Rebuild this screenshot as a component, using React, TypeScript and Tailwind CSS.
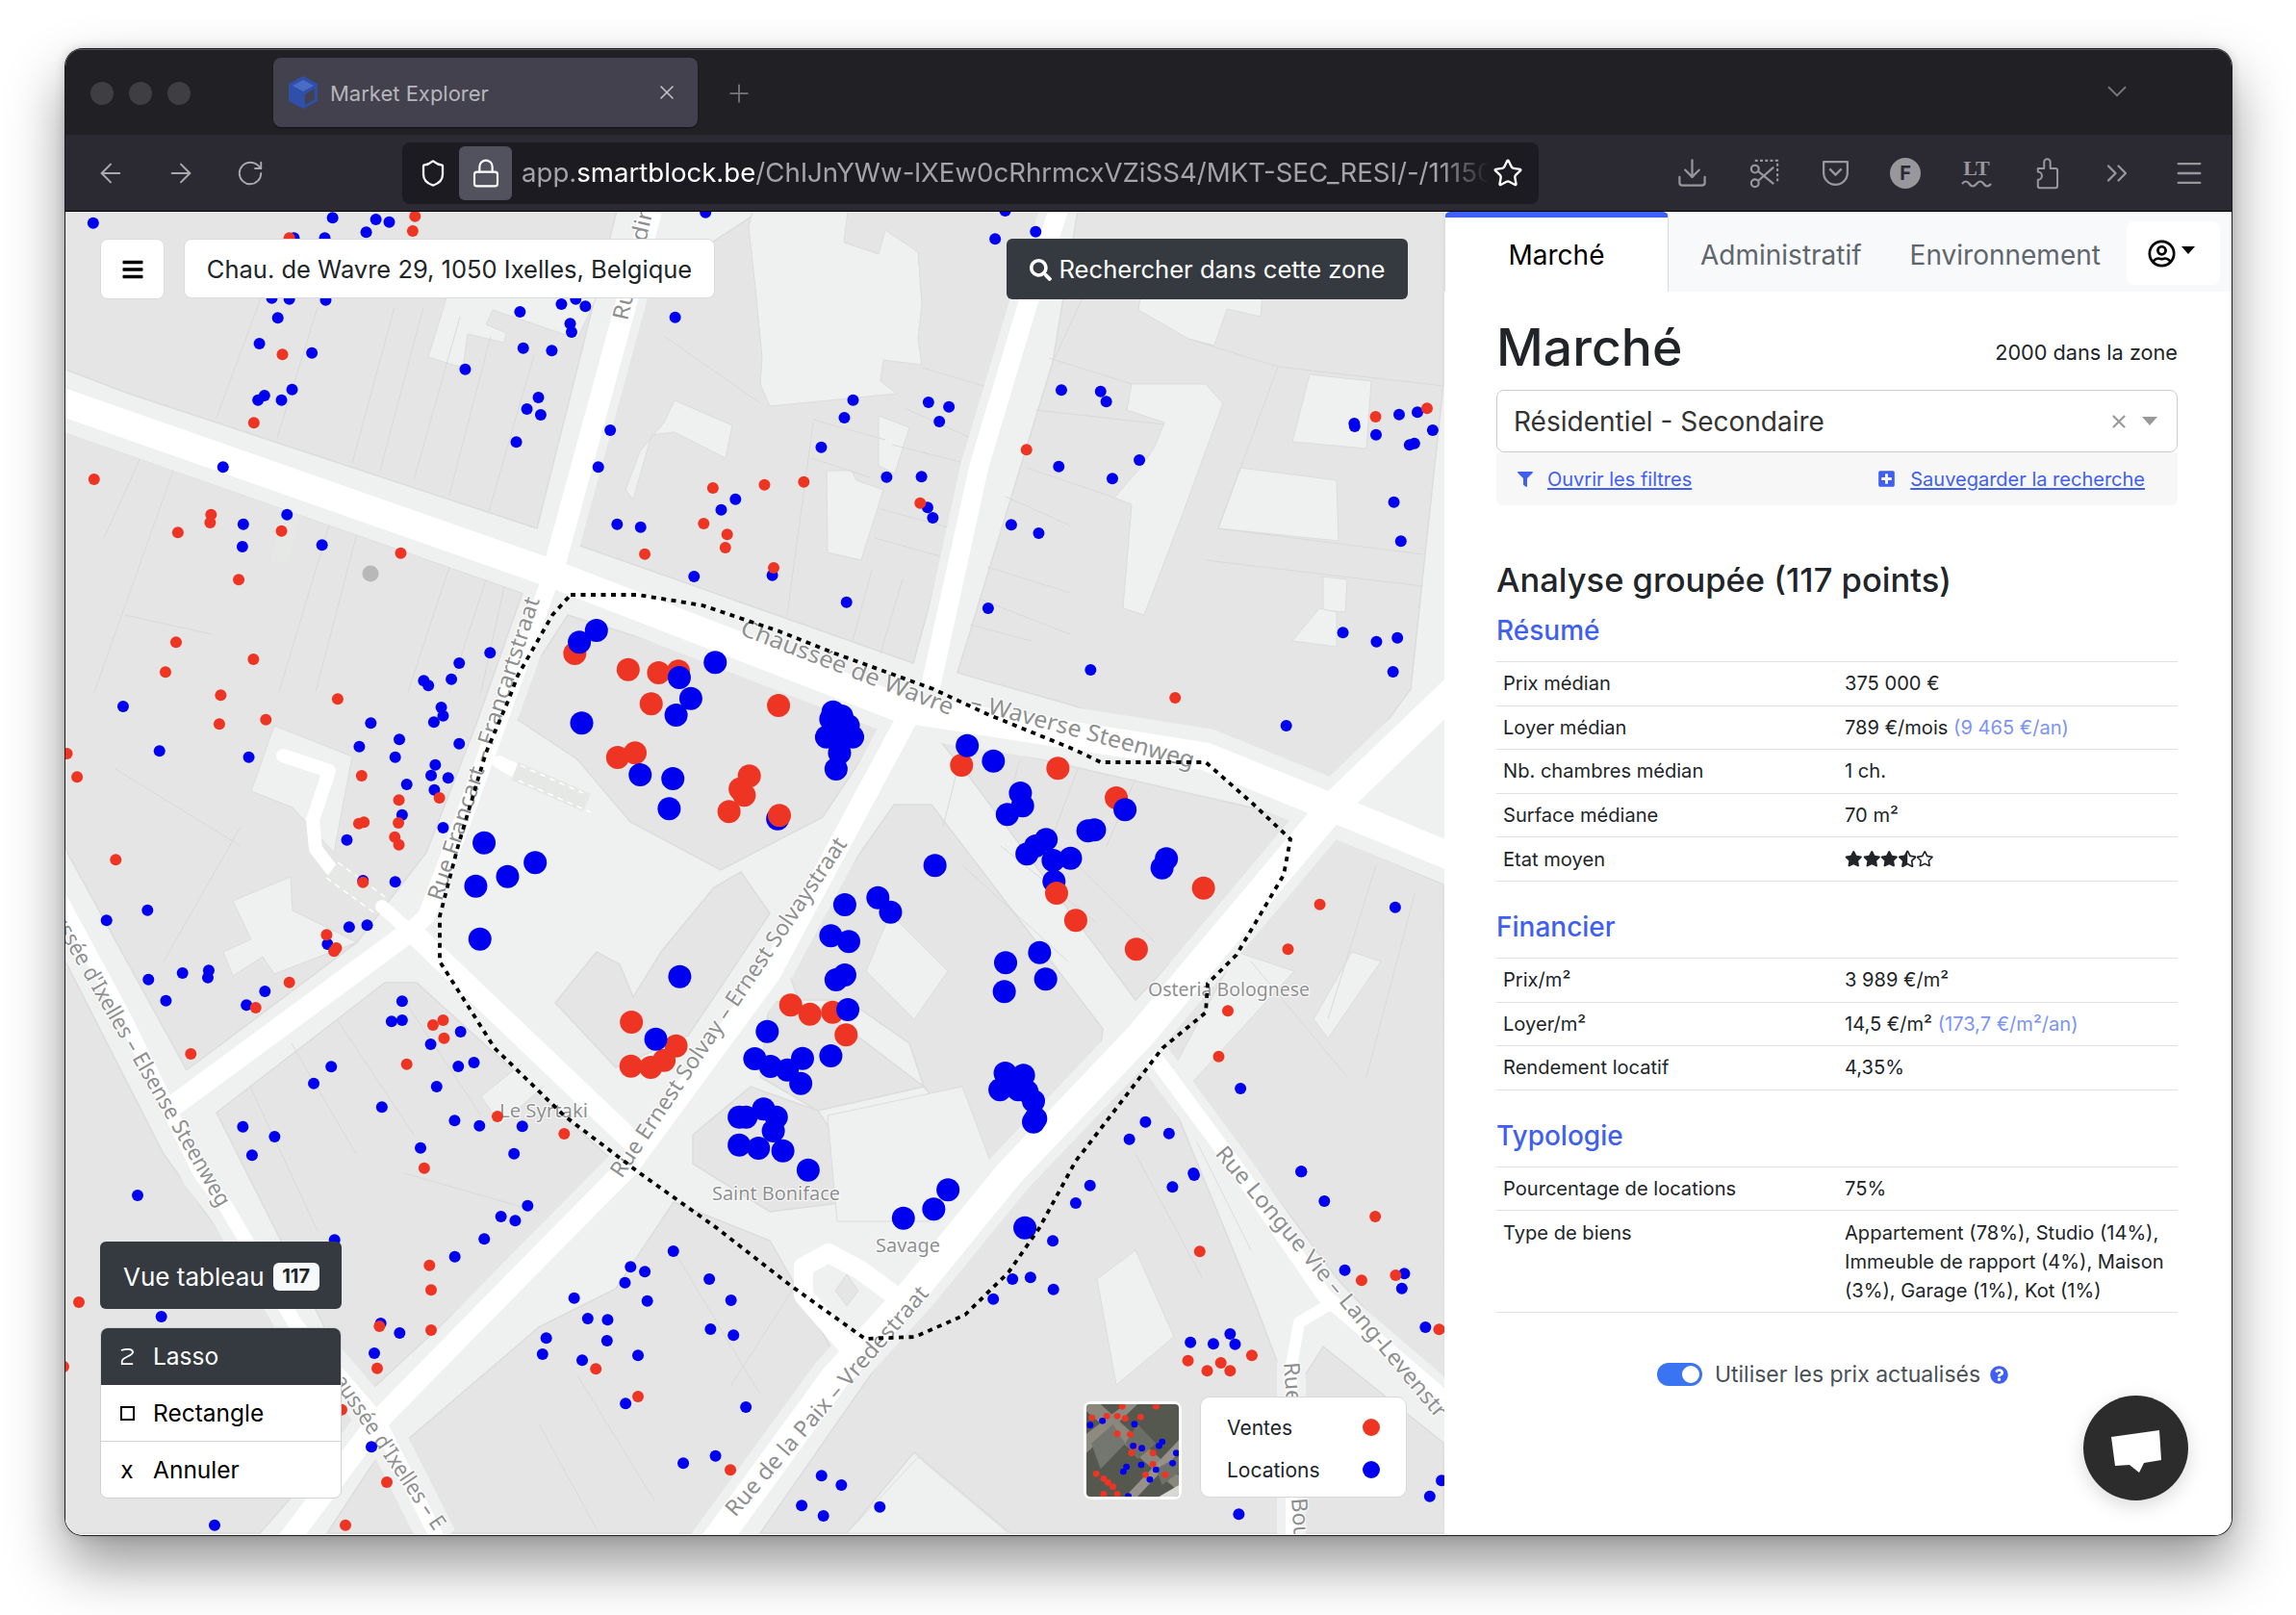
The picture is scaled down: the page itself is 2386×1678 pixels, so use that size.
import React from "react";
import { ArrowLeft, ArrowRight, ChevronDown, ChevronsRight, Download, Lock, Menu, Plus, RotateCw, Shield, Star, X } from "lucide-react";
import {
  FaBars,
  FaFilter,
  FaPlusSquare,
  FaQuestionCircle,
  FaRegStar,
  FaRegUserCircle,
  FaSearch,
  FaStar,
  FaStarHalfAlt,
} from "react-icons/fa";

type P = number[];

// dots were read off crops of the map, so each list keeps its own origin and scale
const from = (ox: number, oy: number, sx: number, pts: P[]) =>
  pts.map(([x, y]) => [ox + x / sx, oy + y / 3]);

const smallBlue = [
  ...from(60, 220, 2.09, [
    [77, 38], [597, 22], [691, 27], [720, 35], [670, 67], [513, 85], [580, 85], [1407, 5], [465, 272], [503, 275], [582, 278],
    [478, 334], [438, 414], [552, 443], [449, 576], [435, 590], [486, 590], [509, 557], [359, 799], [498, 947], [403, 977],
    [401, 1047], [574, 1042], [1004, 315], [1094, 291], [1125, 275], [1146, 298], [1113, 352], [1116, 378], [1011, 428],
    [1073, 436], [885, 494], [1044, 582], [1019, 618], [1049, 636], [996, 721], [1200, 684], [1174, 799], [1341, 332],
    [1215, 977], [1266, 986], [1441, 932], [1472, 899], [1382, 1140], [1552, 1136], [939, 1378], [872, 1410], [855, 1460],
    [795, 1465], [805, 1480],
  ]),
  ...from(800, 220, 2.208, [
    [517, 88], [610, 65], [540, 0], [191, 590], [171, 645], [364, 597], [411, 611], [389, 657], [118, 737], [268, 830], [348, 829],
    [362, 925], [374, 957], [176, 1220], [669, 559], [759, 563], [772, 595], [663, 797], [848, 777], [786, 835], [554, 979],
    [617, 1005], [501, 1239], [736, 1431], [1341, 663], [1342, 672], [1444, 635], [1486, 628], [1391, 698], [1521, 684],
    [1468, 730], [1479, 725], [1432, 908], [1448, 1030], [1315, 1315], [1392, 1343], [1440, 1331], [1430, 1437],
  ]),
  ...from(60, 720, 2.09, [
    [142, 45], [680, 97], [833, 48], [837, 74], [817, 94], [742, 148], [655, 170], [872, 161], [221, 184], [415, 203], [733, 203],
    [820, 227], [811, 260], [848, 268], [758, 288], [818, 305], [748, 383], [837, 423], [628, 461], [663, 588], [733, 592],
    [195, 680], [106, 712], [633, 733], [672, 727], [586, 786], [197, 896], [271, 876], [328, 868], [326, 890], [235, 962],
    [450, 933], [410, 976], [748, 964], [725, 1027], [748, 1023], [875, 1059], [810, 1098], [870, 1167], [904, 1155], [594, 1168],
    [556, 1220], [823, 1230], [704, 1294], [862, 1336], [916, 1352], [1009, 1354], [402, 1355], [471, 1386], [422, 1444],
    [788, 1421], [991, 1439],
  ]),
  ...from(800, 720, 2.208, [
    [1185, 105], [1435, 671], [1080, 1236], [862, 1340], [916, 1376], [825, 1394], [972, 1500], [1219, 1495],
  ]),
  ...from(500, 1180, 1.552, [
    [310, 363], [241, 412], [264, 427], [232, 461], [368, 450], [150, 509], [268, 518], [403, 516], [172, 573], [204, 577], [370, 606],
    [407, 625], [105, 634], [203, 642], [99, 684], [163, 703], [253, 688], [233, 838], [427, 849], [326, 1024], [378, 1001],
    [549, 1063], [581, 1092], [517, 1156], [552, 1188], [643, 1160], [922, 331], [857, 450], [886, 445], [923, 482], [826, 512],
    [982, 158], [959, 213], [1115, 163], [1150, 126], [1323, 115], [1360, 207], [1393, 422], [1489, 433], [1485, 479], [1523, 600],
    [1208, 621], [1144, 647], [1181, 652], [1216, 653], [1222, 1183], [1530, 1127], [1549, 1078], [75, 221], [32, 255], [55, 268], [5, 325],
  ]),
  ...from(60, 1250, 3, [
    [863, 118], [323, 357], [1007, 378], [1066, 408], [987, 471], [978, 763], [489, 1007], [1238, 170],
  ]),
  [143, 1243],
];

const smallRed = [
  ...from(60, 220, 2.09, [
    [776, 17], [771, 63], [503, 85], [488, 448], [426, 661], [79, 837], [333, 947], [331, 972], [261, 1003], [486, 998], [745, 1067],
    [393, 1150], [257, 1345], [425, 1398], [234, 1438], [1423, 864], [1535, 854], [1403, 975], [1454, 1009], [1450, 1050],
    [1275, 1070], [1555, 1113],
  ]),
  ...from(800, 220, 2.208, [[78, 845], [345, 911], [589, 745], [1390, 642], [1508, 616]]),
  ...from(60, 720, 2.09, [
    [354, 10], [608, 22], [351, 100], [452, 86], [20, 192], [42, 265], [660, 261], [741, 337], [829, 330], [740, 408], [654, 410],
    [665, 406], [732, 452], [741, 476], [126, 523], [663, 593], [584, 757], [605, 798], [600, 808], [503, 905], [430, 984],
    [289, 1128], [837, 1023], [815, 1038], [839, 1079], [758, 1160], [955, 1323], [1100, 1377], [796, 1484],
  ]),
  ...from(800, 720, 2.208, [[930, 18], [1262, 662], [1189, 802], [1051, 994], [1030, 1136]]),
  ...from(500, 1180, 1.552, [
    [1442, 255], [1159, 364], [185, 730], [253, 816], [402, 1045], [1475, 438], [1420, 454], [1243, 688], [1140, 704], [1193, 711],
    [1171, 736], [1208, 736], [1545, 607],
  ]),
  ...from(60, 1250, 3, [
    [66, 312], [1159, 197], [1164, 274], [1003, 387], [1164, 399], [996, 518], [18, 513], [885, 647], [1026, 873], [897, 1007],
  ]),
];

const bigRed = [
  ...from(60, 220, 2.09, [[1123, 1380], [1239, 1430], [1305, 1440], [1348, 1435]]),
  ...from(60, 720, 2.09, [
    [1289, 37], [1216, 204], [1254, 190], [1502, 262], [1482, 302], [1491, 322], [1458, 373], [1246, 1029], [1343, 1103], [1317, 1148],
    [1288, 1170], [1245, 1166],
  ]),
  ...from(800, 720, 2.208, [
    [20, 42], [440, 228], [661, 238], [795, 330], [702, 712], [841, 802], [995, 611], [48, 976], [92, 1004], [144, 998], [175, 1069],
  ]),
];

const bigBlue = [
  ...from(60, 220, 2.09, [[1170, 1308], [1133, 1345], [1428, 1408], [1350, 1455]]),
  ...from(60, 720, 2.09, [
    [1138, 97], [1343, 72], [1375, 20], [1265, 258], [1336, 270], [1328, 364], [926, 470], [1037, 532], [977, 575], [908, 605], [917, 770],
    [1351, 887], [1299, 1082], [1541, 1058], [1514, 1143], [1548, 1167], [1480, 1325], [1495, 1325], [1533, 1300], [1480, 1412], [1522, 1422],
  ]),
  ...from(800, 720, 2.208, [
    [145, 62], [165, 75], [140, 85], [180, 105], [130, 140], [165, 110], [190, 140], [155, 150], [160, 190], [152, 240], [18, 395], [453, 167], [513, 215],
    [575, 315], [580, 355], [545, 382], [634, 460], [610, 480], [590, 505], [650, 525], [690, 518], [652, 590], [745, 430], [730, 433],
    [815, 367], [910, 520], [900, 548], [379, 541], [248, 641], [277, 686], [172, 663], [140, 760], [181, 778], [172, 882], [152, 897],
    [179, 990], [541, 844], [619, 812], [633, 895], [538, 934], [140, 1134], [75, 1142], [40, 1178], [71, 1220], [540, 1188], [582, 1195],
    [528, 1240], [570, 1240], [590, 1245], [605, 1275], [610, 1330], [605, 1340], [15, 1325], [8, 1368], [30, 1430], [88, 1490],
  ]),
  ...from(500, 1180, 1.552, [[877, 290], [753, 172], [730, 232], [681, 260]]),
];

const bigRedOnTop = from(800, 720, 2.208, [[658, 627], [22, 385]]);

const blocks = [
  "68,220 641,220 558,550 134,410 68,385",
  "600,567 949,690 1054,313 1090,220 790,220 668,300 640,400",
  "1120,220 1500,220 1500,400 1466,717 1385,827 1112,733 995,700 1094,377",
  "68,450 543,617 495,753 443,887 371,980 194,1113 70,887 68,880",
  "590,640 925,745 855,850 749,905 655,855 600,790 525,740",
  "577,1043 620,990 644,1003 658,1037 687,990 742,923 770,907 800,950 740,1040 715,1077 640,1110",
  "972,765 1357,853 1180,1040 1005,805",
  "929,837 968,837 1146,1070 1144,1087 1050,1200 1030,1210 960,1130 945,1085 880,1040 830,1040 815,1000",
  "800,1040 855,1050 960,1130 850,1155 790,1120",
  "780,1130 850,1155 880,1200 960,1240 800,1260 720,1210 720,1180",
  "225,1157 400,1022 433,1022 640,1210 375,1455",
  "68,1000 170,1200 370,1480 270,1594 68,1594",
  "395,1510 445,1594 340,1594",
  "1198,1097 1305,1357 1340,1450 1340,1594 1050,1594 950,1510 880,1594 790,1594 960,1350",
  "1384,870 1500,920 1501,1450 1390,1330 1204,1080",
  "1375,1400 1500,1500 1501,1594 1350,1594 1350,1440",
  "640,1340 700,1250 800,1290 880,1430 750,1594 470,1594 420,1500 560,1380",
];

const courts = [
  "445,372 481,383 486,348 524,357 526,347 505,338 512,323 600,353 620,310 464,310",
  "800,220 881,220 877,253 913,265 920,240 954,263 958,317 954,353 958,380 918,375 915,397 932,410 800,423 790,400 792,373 785,300 778,237 782,220",
  "701,417 761,443 754,477 701,450 677,453 658,520 650,510 665,470 690,440",
  "859,490 885,490 890,500 918,510 895,583 860,575",
  "913,433 945,445 930,493 913,485",
  "1176,400 1253,400 1271,420 1226,543 1189,640 1167,633 1176,525 1158,518 1185,487 1199,467 1210,440 1171,427",
  "1289,487 1389,500 1391,563 1266,550",
  "1361,390 1425,397 1420,467 1343,460",
  "1375,600 1400,603 1398,637 1375,635",
  "1343,667 1371,633 1389,637 1389,673",
  "1185,310 1312,310 1310,330 1275,322 1262,360 1235,353 1183,323",
  "285,755 366,787 347,887 304,840 261,823",
  "302,912 242,937 261,977 232,990 242,1015 273,995 285,1013 371,980 304,947",
  "925,950 985,1010 950,1060 900,1010",
  "860,1160 1000,1130 1030,1210 1000,1270 870,1270",
  "1285,990 1345,1010 1235,1130 1220,1110",
  "1405,990 1435,1000 1380,1080 1365,1060",
  "954,1515 1048,1594 880,1594",
  "500,1140 550,1100 570,1125 520,1170",
  "1140,1330 1180,1300 1220,1390 1160,1440",
];

const roads: { pts: string; w: number; side: number }[] = [
  { pts: "40,410 574,597 936,737 1253,787 1384,840 1530,900", w: 29, side: 58 },
  { pts: "574,597 677,220", w: 22, side: 40 },
  { pts: "574,597 529,720 481,853 443,953 427,968", w: 18, side: 36 },
  { pts: "427,968 180,1150", w: 22, side: 42 },
  { pts: "427,968 660,1190", w: 22, side: 42 },
  { pts: "945,743 800,1013 653,1213 560,1307 393,1477 293,1610", w: 22, side: 44 },
  { pts: "1384,840 1185,1077 1049,1220 951,1340 867,1433 738,1610", w: 30, side: 50 },
  { pts: "1198,1097 1289,1220 1376,1347 1520,1470", w: 16, side: 34 },
  { pts: "60,930 130,1060 208,1220 235,1255 307,1377 393,1477 455,1600", w: 15, side: 40 },
  { pts: "1384,840 1530,700", w: 30, side: 50 },
  { pts: "1103,210 1067,320 1017,487 967,715", w: 20, side: 38 },
  { pts: "1342,1610 1342,1420 1350,1375 1384,1355", w: 12, side: 30 },
];

const parcels = [
  [225, 435, 275, 300], [288, 456, 330, 320], [366, 482, 410, 320], [395, 490, 440, 320], [430, 500, 478, 330], [467, 515, 510, 350], [508, 532, 555, 370],
  [180, 490, 98, 720], [342, 547, 290, 720], [371, 555, 328, 720], [467, 590, 424, 720], [505, 603, 467, 720], [524, 610, 500, 720],
  [108, 560, 146, 477], [845, 440, 818, 640], [906, 593, 886, 667], [938, 603, 915, 680], [845, 437, 920, 458], [843, 477, 904, 497],
  [909, 560, 981, 580], [915, 530, 990, 550], [927, 463, 1006, 483], [940, 425, 1013, 458], [959, 383, 1038, 407],
  [1090, 373, 1176, 400], [1076, 427, 1210, 442], [1067, 487, 1158, 518], [1045, 517, 1112, 547], [1026, 590, 1112, 617], [1017, 623, 1112, 660],
  [1008, 650, 1072, 667], [1235, 353, 1328, 382], [1328, 382, 1500, 402], [1328, 382, 1266, 550], [1253, 583, 1479, 610], [1266, 550, 1479, 577],
  [1130, 300, 1094, 377], [690, 350, 790, 420], [1000, 780, 980, 860], [1060, 790, 1040, 860], [1120, 800, 1090, 880], [1180, 810, 1150, 880],
  [1000, 900, 1110, 1000], [1040, 880, 1140, 960], [1100, 880, 1200, 980], [250, 860, 170, 1000], [130, 640, 220, 660], [120, 800, 250, 880],
  [300, 1080, 370, 1200], [350, 1060, 430, 1180], [420, 1040, 500, 1160], [260, 1130, 330, 1280], [420, 1220, 560, 1260],
  [1430, 900, 1380, 1060], [1470, 930, 1420, 1120], [1300, 1000, 1400, 1120], [1240, 1180, 1300, 1300], [1180, 1200, 1250, 1330], [850, 1300, 760, 1440],
  [700, 1300, 790, 1450], [600, 1430, 680, 1560], [560, 1480, 620, 1590],
];

const Label = ({ x, y, r, size = 23, len, children }: { x: number; y: number; r: number; size?: number; len?: number; children: string }) => (
  <text
    x={x}
    y={y}
    transform={`rotate(${r} ${x} ${y})`}
    fontFamily="'Noto Sans', sans-serif"
    fontSize={size}
    fill="#8e9090"
    stroke="#ffffff"
    strokeWidth="2"
    paintOrder="stroke"
    textLength={len}
    lengthAdjust="spacingAndGlyphs"
  >
    {children}
  </text>
);

const MapBase = () => (
  <svg viewBox="68 221 1433 1374" className="block w-[1433px] h-[1374px]">
    <rect x="68" y="221" width="1433" height="1374" fill="#eff1f0" />
    {blocks.map((pts) => (
      <polygon key={pts} points={pts} fill="#e5e5e5" stroke="#dcdcdc" strokeWidth="1.5" />
    ))}
    {courts.map((pts) => (
      <polygon key={pts} points={pts} fill="#eff1f0" stroke="#dcdcdc" strokeWidth="1" />
    ))}
    {parcels.map(([a, b, c, d]) => (
      <line key={`${a}-${b}-${c}`} x1={a} y1={b} x2={c} y2={d} stroke="#d9d9d9" strokeWidth="1" />
    ))}
    {roads.map((r) => (
      <polyline key={r.pts + "s"} points={r.pts} fill="none" stroke="#eff1f0" strokeWidth={r.side} strokeLinejoin="round" />
    ))}
    {roads.map((r) => (
      <polyline key={r.pts} points={r.pts} fill="none" stroke="#ffffff" strokeWidth={r.w} strokeLinejoin="round" />
    ))}
    <polyline points="294,786 342,802 325,853 328,883 345,905" fill="none" stroke="#fff" strokeWidth="14" strokeLinecap="round" strokeLinejoin="round" />
    <polyline points="345,905 397,943" fill="none" stroke="#e6e8e6" strokeWidth="22" />
    <polyline points="345,905 397,943" fill="none" stroke="#fff" strokeWidth="1.5" strokeDasharray="6 5" transform="translate(-6,8)" />
    <polyline points="345,905 397,943" fill="none" stroke="#fff" strokeWidth="1.5" strokeDasharray="6 5" transform="translate(6,-8)" />
    <polyline points="397,943 425,968" fill="none" stroke="#fff" strokeWidth="14" strokeLinecap="round" />
    <polyline points="519,793 535,802" fill="none" stroke="#fff" strokeWidth="14" strokeLinecap="round" />
    <polyline points="535,802 610,835" fill="none" stroke="#e6e8e6" strokeWidth="20" />
    <polyline points="535,802 610,835" fill="none" stroke="#fff" strokeWidth="1.5" strokeDasharray="6 5" transform="translate(-4,-10)" />
    <polyline points="535,802 610,835" fill="none" stroke="#fff" strokeWidth="1.5" strokeDasharray="6 5" transform="translate(4,10)" />
    <polyline points="303,535 290,585" fill="none" stroke="#e6e8e6" strokeWidth="18" />
    <polyline points="887,1407 835,1347 835,1317 861,1303 893,1320 938,1353" fill="none" stroke="#fff" strokeWidth="20" strokeLinejoin="round" />
    <polygon points="868,1342 880,1325 892,1342 880,1358" fill="#e5e5e5" stroke="#dcdcdc" />

    <Label x={34} y={922} r={60} size={23} len={386}>Chaussée d'Ixelles – Elsense Steenweg</Label>
    <Label x={331} y={1414} r={56} size={23} len={215}>Chaussée d'Ixelles – E</Label>
    <Label x={768} y={660} r={21} size={24} len={235}>Chaussée de Wavre</Label>
    <Label x={1007} y={737} r={15} size={24} len={240}>– Waverse Steenweg</Label>
    <Label x={459} y={938} r={-72} size={23} len={330}>Rue Francart – Francartstraat</Label>
    <Label x={646} y={1226} r={-56} size={23} len={420}>Rue Ernest Solvay – Ernest Solvaystraat</Label>
    <Label x={1262} y={1200} r={50} size={23} len={360}>Rue Longue Vie – Lang-Levenstr</Label>
    <Label x={764} y={1578} r={-49} size={23} len={308}>Rue de la Paix – Vredestraat</Label>
    <Label x={652} y={335} r={-77} size={23} len={130}>Rue Hildim</Label>
    <Label x={1334} y={1417} r={86} size={23}>Rue</Label>
    <Label x={1342} y={1558} r={86} size={23}>Bou</Label>
    <Label x={519} y={1162} r={0} size={20} len={92}>Le Syrtaki</Label>
    <Label x={740} y={1248} r={0} size={20} len={133}>Saint Boniface</Label>
    <Label x={910} y={1302} r={0} size={20} len={67}>Savage</Label>
    <Label x={1193} y={1036} r={0} size={20} len={168}>Osteria Bolognese</Label>

    <circle cx="385" cy="597" r="8.5" fill="#b8b8b8" />
    {bigRed.map(([x, y]) => <circle key={`r${x}${y}`} cx={x} cy={y} r="12" fill="#ee3524" />)}
    {bigBlue.map(([x, y]) => <circle key={`b${x}${y}`} cx={x} cy={y} r="12" fill="#0000f0" />)}
    {bigRedOnTop.map(([x, y]) => <circle key={`t${x}${y}`} cx={x} cy={y} r="12" fill="#ee3524" />)}
    {smallBlue.map(([x, y]) => <circle key={`sb${x}${y}`} cx={x} cy={y} r="6" fill="#0000f0" />)}
    {smallRed.map(([x, y]) => <circle key={`sr${x}${y}`} cx={x} cy={y} r="6" fill="#ee3524" />)}

    <polygon
      points="593,619 663,619 730,630 810,657 868,680 970,717 1026,743 1117,780 1144,793 1253,793 1303,837 1341,873 1334,910 1285,993 1255,1023 1253,1053 1208,1090 1126,1197 1118,1207 1080,1277 1048,1323 1003,1367 951,1390 899,1392 822,1337 745,1277 665,1220 586,1160 514,1090 457,1000 457,953 476,880 505,783 529,727 538,703 574,640"
      fill="none"
      stroke="#000"
      strokeWidth="3.8"
      strokeDasharray="5 5.5"
    />
  </svg>
);

const Thumb = () => {
  const red = [[1035, 845], [986, 880], [1010, 875], [1027, 875], [1040, 882], [1065, 878], [1027, 930], [1048, 932], [1055, 970], [1050, 990], [1085, 990], [1085, 1025], [993, 1055], [1005, 1070], [1012, 1082], [1020, 1095], [1073, 1058], [1105, 1058], [1005, 1118], [1027, 1118], [1090, 845]];
  const blue = [[983, 903], [1003, 890], [1055, 900], [1053, 968], [1067, 975], [1100, 955], [1095, 968], [1123, 990], [1117, 1022], [1066, 1027], [1090, 1042], [1042, 1033], [1037, 1048], [1080, 1073], [1045, 1125]];
  return (
    <svg viewBox="977 838 150 288" preserveAspectRatio="none" className="block w-full h-full rounded-[4px]">
      <rect x="977" y="838" width="150" height="288" fill="#55584f" />
      <polygon points="977,930 1040,838 1060,838 977,990" fill="#8f8a80" />
      <polygon points="1000,838 1127,1060 1127,1110 977,860 977,838" fill="#8b877c" />
      <polygon points="1040,1126 1127,950 1127,990 1060,1126" fill="#96918a" />
      <polygon points="985,960 1020,900 1040,960 1000,1040" fill="#74776f" />
      <polygon points="1060,900 1090,960 1060,1010 1040,960" fill="#6b6e64" />
      <polygon points="1090,1040 1127,1000 1127,1050 1100,1090" fill="#6f7268" />
      <polygon points="1095,1126 1127,1090 1127,1126" fill="#d8d8d4" />
      {red.map(([x, y]) => <ellipse key={`${x}-${y}`} cx={x} cy={y} rx="5.4" ry="10" fill="#ee3524" />)}
      {blue.map(([x, y]) => <ellipse key={`${x}-${y}`} cx={x} cy={y} rx="5.4" ry="10" fill="#0000f0" />)}
    </svg>
  );
};

const BrowserChrome = () => (
  <>
    <div className="h-[89px] bg-[#202025] flex items-start shrink-0 border-t border-[#55555a]">
      <div className="flex gap-[16px] pl-[26px] pt-[33px] w-[216px]">
        <span className="w-[24px] h-[24px] rounded-full bg-[#3e3e43]" />
        <span className="w-[24px] h-[24px] rounded-full bg-[#3e3e43]" />
        <span className="w-[24px] h-[24px] rounded-full bg-[#3e3e43]" />
      </div>
      <div className="mt-[8px] w-[441px] h-[72px] rounded-[8px] bg-[#42414d] flex items-center pl-[15px] pr-[20px] shadow-[0_1px_2px_rgba(0,0,0,.4)]">
        <svg viewBox="0 0 32 36" className="w-[32px] h-[36px] shrink-0">
          <polygon points="16,1 31,9 31,27 16,35 1,27 1,9" fill="#2f4fa8" />
          <polygon points="16,5 27,11 16,17 5,11" fill="#4a6cc8" />
          <polygon points="18,20 28,14 28,25 18,31" fill="#42414d" />
        </svg>
        <span className="ml-[12px] mt-[2px] flex-1 text-[22px] text-[#b6b6ba] whitespace-nowrap">Market Explorer</span>
        <X className="w-[24px] h-[24px] text-[#c4c4c8]" strokeWidth={1.6} />
      </div>
      <Plus className="mt-[30px] ml-[28px] w-[30px] h-[30px] text-[#77777c]" strokeWidth={1.4} />
      <div className="flex-1 flex justify-end pt-[26px] pr-[102px]">
        <ChevronDown className="w-[34px] h-[34px] text-[#77777c]" strokeWidth={1.3} />
      </div>
    </div>
    <div className="h-[80px] bg-[#2b2a33] flex items-center shrink-0 border-b border-black">
      <div className="w-[350px] flex items-center pl-[31px] gap-[41px] text-[#a9a9ae]">
        <ArrowLeft className="w-[32px] h-[32px]" strokeWidth={1.5} />
        <ArrowRight className="w-[32px] h-[32px]" strokeWidth={1.5} />
        <RotateCw className="w-[30px] h-[30px]" strokeWidth={1.5} />
      </div>
      <div className="w-[1181px] h-[64px] rounded-[8px] bg-[#1c1b22] flex items-center pl-[17px] pr-[16px]">
        <Shield className="w-[30px] h-[34px] text-white shrink-0" strokeWidth={1.8} />
        <div className="ml-[12px] w-[55px] h-[56px] rounded-[6px] bg-[#52525e] flex items-center justify-center shrink-0">
          <Lock className="w-[32px] h-[34px] text-white" strokeWidth={1.6} />
        </div>
        <div className="ml-[10px] flex-1 overflow-hidden whitespace-nowrap text-[27.6px] text-[#a4a4a8] [mask-image:linear-gradient(to_left,transparent,black_50px)]">
          app.<span className="text-white">smartblock.be</span>/ChIJnYWw-lXEw0cRhrmcxVZiSS4/MKT-SEC_RESI/-/111508
        </div>
        <Star className="ml-[4px] w-[32px] h-[32px] text-white shrink-0" strokeWidth={1.8} />
      </div>
      <div className="flex-1 flex items-center pl-[142px] gap-[40px] text-[#97979c]">
        <Download className="w-[35px] h-[35px]" strokeWidth={1.5} />
        <svg viewBox="0 0 36 36" className="w-[35px] h-[35px]" fill="none" stroke="currentColor" strokeWidth="2.2">
          <path d="M8 5h24v22" strokeDasharray="3 2.4" />
          <circle cx="8" cy="14" r="4" />
          <circle cx="8" cy="29" r="4" />
          <path d="M11 16l17 14M11 27l17-15" />
        </svg>
        <svg viewBox="0 0 32 32" className="w-[33px] h-[33px]" fill="none" stroke="currentColor" strokeWidth="2.2">
          <path d="M4 5h24v11a12 12 0 0 1-24 0z" strokeLinejoin="round" />
          <path d="M10 12l6 6 6-6" />
        </svg>
        <span className="w-[32px] h-[32px] rounded-full bg-[#97979c] text-[#2b2a33] text-[20px] font-bold flex items-center justify-center">F</span>
        <span className="w-[36px] flex flex-col items-center font-['Liberation_Serif',serif] text-[22px] leading-[20px] font-semibold">
          LT
          <svg viewBox="0 0 32 8" className="w-[32px] h-[8px] mt-[2px]" fill="none" stroke="currentColor" strokeWidth="2.2">
            <path d="M1 4q4-5 7.5 0t7.5 0 7.5 0 7.5 0" />
          </svg>
        </span>
        <svg viewBox="0 0 30 38" className="w-[30px] h-[35px]" fill="none" stroke="currentColor" strokeWidth="2.2" strokeLinejoin="round">
          <path d="M5 14h7V7a3.5 3.5 0 0 1 7 0v7h6a2 2 0 0 1 2 2v18a2 2 0 0 1-2 2H7a2 2 0 0 1-2-2v-7a4.5 4.5 0 0 0 0-9z" />
        </svg>
        <ChevronsRight className="w-[36px] h-[36px]" strokeWidth={1.5} />
        <Menu className="w-[34px] h-[34px]" strokeWidth={1.6} />
      </div>
    </div>
  </>
);

const MapPane = () => (
  <div className="relative w-[1433px] overflow-hidden shrink-0">
    <MapBase />
    <div className="absolute left-[36px] top-[28px] flex gap-[20px]">
      <div className="w-[67px] h-[63px] rounded-[8px] bg-white border border-[#d8dbe0] flex items-center justify-center">
        <FaBars className="text-[24px] text-black" />
      </div>
      <div className="w-[552px] h-[62px] rounded-[8px] bg-white border border-[#d8dbe0] flex items-center justify-center pt-[2px] text-[25.5px] text-[#212529] whitespace-nowrap">
        Chau. de Wavre 29, 1050 Ixelles, Belgique
      </div>
    </div>
    <div className="absolute left-[978px] top-[28px] w-[417px] h-[63px] rounded-[6px] bg-[#343a40] flex items-center justify-center gap-[8px] pt-[2px] text-white text-[25.6px] whitespace-nowrap">
      <FaSearch className="text-[23px]" />
      Rechercher dans cette zone
    </div>
    <div className="absolute left-[36px] top-[1070px] w-[251px] h-[70px] rounded-[6px] bg-[#343a40] flex items-center pl-[24px] pt-[2px] text-white text-[26px]">
      Vue tableau
      <span className="ml-[9px] w-[48px] h-[29px] rounded-[6px] bg-[#f8f9fa] text-[#212529] text-[20px] font-bold flex items-center justify-center">117</span>
    </div>
    <div className="absolute left-[36px] top-[1159px] w-[251px] rounded-[8px] overflow-hidden bg-white border border-[#d0d2d4] text-[24.5px]">
      <div className="h-[59px] bg-[#343a40] text-white flex items-center">
        <span className="w-[54px] flex justify-center">
          <svg viewBox="0 0 16 20" className="w-[14px] h-[18px]" fill="none" stroke="currentColor" strokeWidth="2">
            <path d="M1 2C8 0 14 0 15 4 15 9 2 10 2 15v3h13" />
          </svg>
        </span>
        Lasso
      </div>
      <div className="h-[59px] text-black flex items-center border-b border-[#d0d2d4]">
        <span className="w-[54px] flex justify-center"><span className="w-[15px] h-[15px] border-2 border-black" /></span>Rectangle
      </div>
      <div className="h-[58px] text-black flex items-center">
        <span className="w-[54px] text-center">x</span>Annuler
      </div>
    </div>
    <div className="absolute left-[1058px] top-[1236px] w-[102px] h-[102px] rounded-[8px] bg-white p-[3px]">
      <Thumb />
    </div>
    <div className="absolute left-[1179px] top-[1231px] w-[215px] h-[105px] rounded-[10px] bg-white border border-[#d8d8d8] px-[27px] py-[10px] text-[21px] text-[#212529]">
      <div className="h-[44px] flex items-center justify-between">
        Ventes <span className="w-[18px] h-[18px] rounded-full bg-[#ee3524] -mt-[3px]" />
      </div>
      <div className="h-[44px] flex items-center justify-between">
        Locations <span className="w-[18px] h-[18px] rounded-full bg-[#0000f0] -mt-[3px]" />
      </div>
    </div>
  </div>
);

const Stars = () => (
  <span className="flex text-[18.5px] text-[#212529]">
    <FaStar />
    <FaStar />
    <FaStar />
    <FaStarHalfAlt />
    <FaRegStar />
  </span>
);

const Row = ({ label, children }: { label: string; children: React.ReactNode }) => (
  <div className="grid grid-cols-[362px_1fr] border-b border-[#dee2e6] text-[20.1px] leading-[30px] text-[#212529]">
    <div className="pl-[7px] py-[7.3px]">{label}</div>
    <div className="py-[7.3px]">{children}</div>
  </div>
);

const Muted = ({ children }: { children: string }) => <span className="text-[#7c93f7]">{children}</span>;

const SectionTitle = ({ children, className }: { children: string; className: string }) => (
  <h3 className={`text-[28px] font-medium leading-[36px] text-[#3f5ff2] border-b border-[#dee2e6] pb-[14px] ${className}`}>{children}</h3>
);

const Panel = () => (
  <div className="relative flex-1 bg-white">
    <div className="h-[83px] bg-[#f8f9fb] flex items-start">
      <div className="w-[233px] h-[83px] bg-white border-x border-[#d8dbe0] border-t-[6px] border-t-[#3d62f5] rounded-t-[6px] flex items-center justify-center text-[28px] text-black">
        Marché
      </div>
      <div className="pt-[23px] pl-[33px] text-[28px] leading-[44px] text-[#5f666d]">Administratif</div>
      <div className="pt-[23px] pl-[50px] text-[28px] leading-[44px] text-[#5f666d]">Environnement</div>
      <div className="ml-[27px] mt-[10px] w-[97px] h-[66px] rounded-[8px] bg-white flex items-center pl-[22px] gap-[6px]">
        <FaRegUserCircle className="text-[29px] text-black" />
        <span className="w-0 h-0 border-x-[7px] border-x-transparent border-t-[8px] border-t-black -mt-[6px]" />
      </div>
    </div>
    <div className="pl-[54px] pr-[56px]">
      <div className="mt-[16px] h-[75px] flex items-end justify-between">
        <h1 className="text-[53.5px] leading-[66px] font-medium text-[#212529]">Marché</h1>
        <span className="text-[21.7px] leading-[30px] pb-[13px] text-[#212529]">2000 dans la zone</span>
      </div>
      <div className="mt-[11px] h-[65px] rounded-[8px] bg-white border border-[#cccccc] flex items-center pl-[17px] pr-[20px] text-[28px] text-[#333333]">
        <span className="flex-1">Résidentiel - Secondaire</span>
        <X className="w-[22px] h-[22px] text-[#9a9a9a]" strokeWidth={2.4} />
        <span className="ml-[13px] w-0 h-0 border-x-[8px] border-x-transparent border-t-[9px] border-t-[#999999]" />
      </div>
      <div className="h-[55px] bg-[#f7f7f7] rounded-b-[6px] flex items-center justify-between pl-[22px] pr-[34px] text-[20px] text-[#3f5ff2]">
        <span className="flex items-center gap-[15px]">
          <FaFilter className="text-[16px]" />
          <span className="underline underline-offset-2">Ouvrir les filtres</span>
        </span>
        <span className="flex items-center gap-[15px]">
          <FaPlusSquare className="text-[19px]" />
          <span className="underline underline-offset-2">Sauvegarder la recherche</span>
        </span>
      </div>
      <h2 className="mt-[55px] text-[34.5px] leading-[46px] font-medium text-[#212529]">Analyse groupée (117 points)</h2>
      <SectionTitle className="mt-[11px]">Résumé</SectionTitle>
      <Row label="Prix médian">375 000 €</Row>
      <Row label="Loyer médian">
        789 €/mois <Muted>(9 465 €/an)</Muted>
      </Row>
      <Row label="Nb. chambres médian">1 ch.</Row>
      <Row label="Surface médiane">70 m²</Row>
      <Row label="Etat moyen">
        <span className="block pt-[5px]"><Stars /></span>
      </Row>
      <SectionTitle className="mt-[29px]">Financier</SectionTitle>
      <Row label="Prix/m²">3 989 €/m²</Row>
      <Row label="Loyer/m²">
        14,5 €/m² <Muted>(173,7 €/m²/an)</Muted>
      </Row>
      <Row label="Rendement locatif">4,35%</Row>
      <SectionTitle className="mt-[29px]">Typologie</SectionTitle>
      <Row label="Pourcentage de locations">75%</Row>
      <Row label="Type de biens">Appartement (78%), Studio (14%), Immeuble de rapport (4%), Maison (3%), Garage (1%), Kot (1%)</Row>
      <div className="mt-[47px] pr-[9px] flex items-center justify-center gap-[13px] text-[23px] text-[#495057]">
        <span className="w-[47px] h-[24px] rounded-full bg-[#3a74f2] flex items-center justify-end pr-[3px]">
          <span className="w-[18px] h-[18px] rounded-full bg-white" />
        </span>
        <span className="flex items-center gap-[10px]">
          Utiliser les prix actualisés
          <FaQuestionCircle className="text-[19px] text-[#3f5ff2]" />
        </span>
      </div>
    </div>
    <div className="absolute right-[45px] bottom-[36px] w-[109px] h-[109px] rounded-full bg-[#2c2c2c] shadow-[0_6px_20px_rgba(0,0,0,.15)] flex items-center justify-center">
      <svg viewBox="0 0 52 44" className="w-[52px] h-[44px] mt-[6px]">
        <polygon points="0,7 50,0 52,31 34,34 29,44 19,36 4,37" fill="#ffffff" />
      </svg>
    </div>
  </div>
);

export default function App() {
  return (
    <div className="min-h-[1678px] bg-white pt-[51px] pl-[68px] font-['Inter',sans-serif]">
      <div className="w-[2251px] h-[1544px] rounded-[18px] overflow-hidden flex flex-col bg-white shadow-[0_0_0_1px_#1d1d1f,0_30px_60px_rgba(0,0,0,0.42),0_0_12px_rgba(0,0,0,0.18)]">
        <BrowserChrome />
        <div className="flex flex-1 min-h-0">
          <MapPane />
          <Panel />
        </div>
      </div>
    </div>
  );
}
